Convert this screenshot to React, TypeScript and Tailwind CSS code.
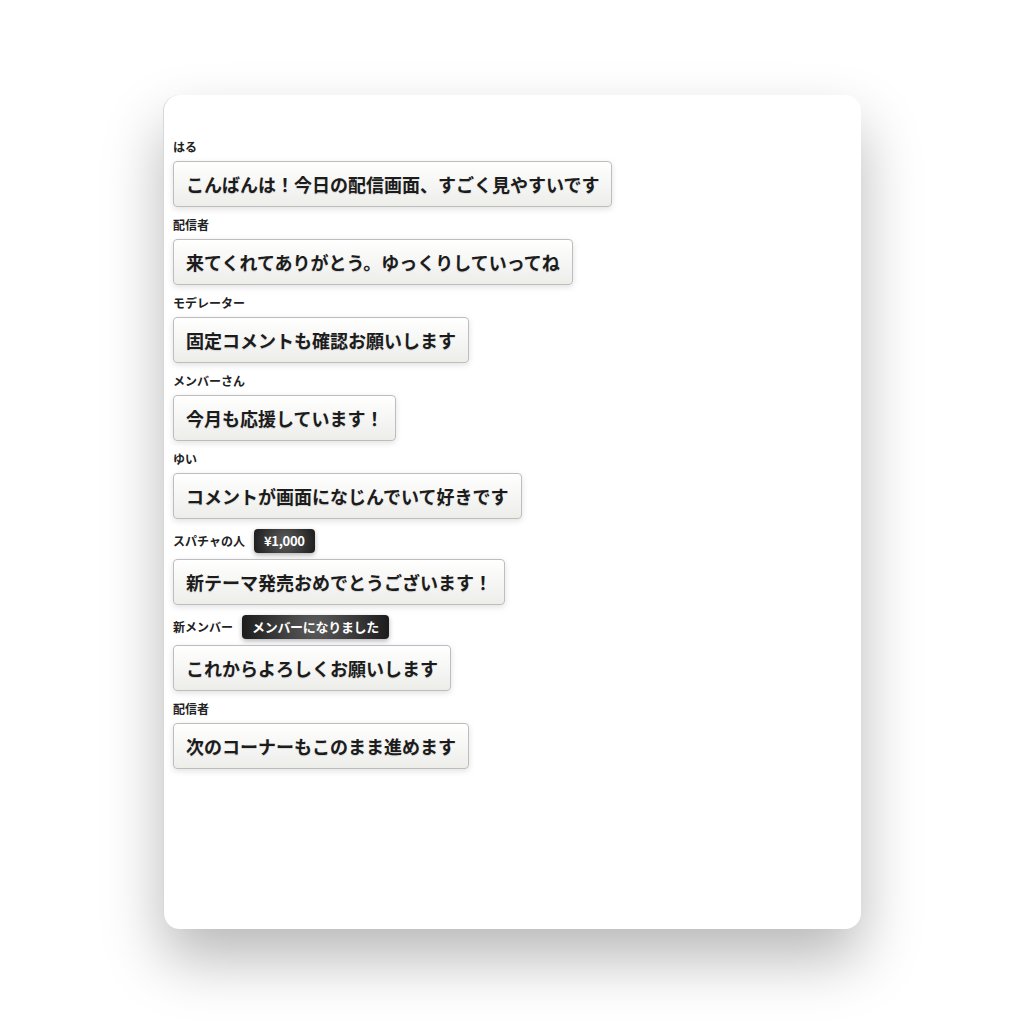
const messages: { name: string; text: string; badge?: string }[] = [
  { name: "はる", text: "こんばんは！今日の配信画面、すごく見やすいです" },
  { name: "配信者", text: "来てくれてありがとう。ゆっくりしていってね" },
  { name: "モデレーター", text: "固定コメントも確認お願いします" },
  { name: "メンバーさん", text: "今月も応援しています！" },
  { name: "ゆい", text: "コメントが画面になじんでいて好きです" },
  { name: "スパチャの人", text: "新テーマ発売おめでとうございます！", badge: "¥1,000" },
  { name: "新メンバー", text: "これからよろしくお願いします", badge: "メンバーになりました" },
  { name: "配信者", text: "次のコーナーもこのまま進めます" },
];

export default function App() {
  return (
    <div
      className="w-[1024px] h-[1024px] bg-white pt-[95px] pl-[163px]"
      style={{ fontFamily: '"Noto Sans CJK JP", "Noto Sans", sans-serif' }}
    >
      <div className="w-[698px] h-[834px] bg-white rounded-[16px] border-l border-[#d8d8d8] shadow-[0_30px_60px_rgba(0,0,0,0.28)] pt-[44px] pl-[9px] flex flex-col gap-[10px]">
        {messages.map((m, i) => (
          <div key={i} className="flex flex-col items-start gap-[6px]">
            <div className="flex items-center gap-[9px]">
              <span className="text-[12px] leading-[16px] font-bold text-[#222]">{m.name}</span>
              {m.badge && (
                <span className="h-[24px] px-[10px] flex items-center rounded-[4px] text-[13px] tracking-[-0.3px] font-bold text-white bg-[radial-gradient(circle_at_50%_50%,#5c5c5c,#1c1c1c)] shadow-[0_2px_5px_rgba(0,0,0,0.3)]">
                  {m.badge}
                </span>
              )}
            </div>
            <div className="px-[12px] py-[10px] rounded-[4px] border border-[#bdbdbd] bg-gradient-to-b from-white to-[#ededea] shadow-[0_2px_6px_rgba(0,0,0,0.12)] text-[18px] leading-[24px] font-bold text-[#1c1c1c] whitespace-nowrap [text-shadow:0_1px_1px_rgba(0,0,0,0.12)]">
              {m.text}
            </div>
          </div>
        ))}
      </div>
    </div>
  );
}
